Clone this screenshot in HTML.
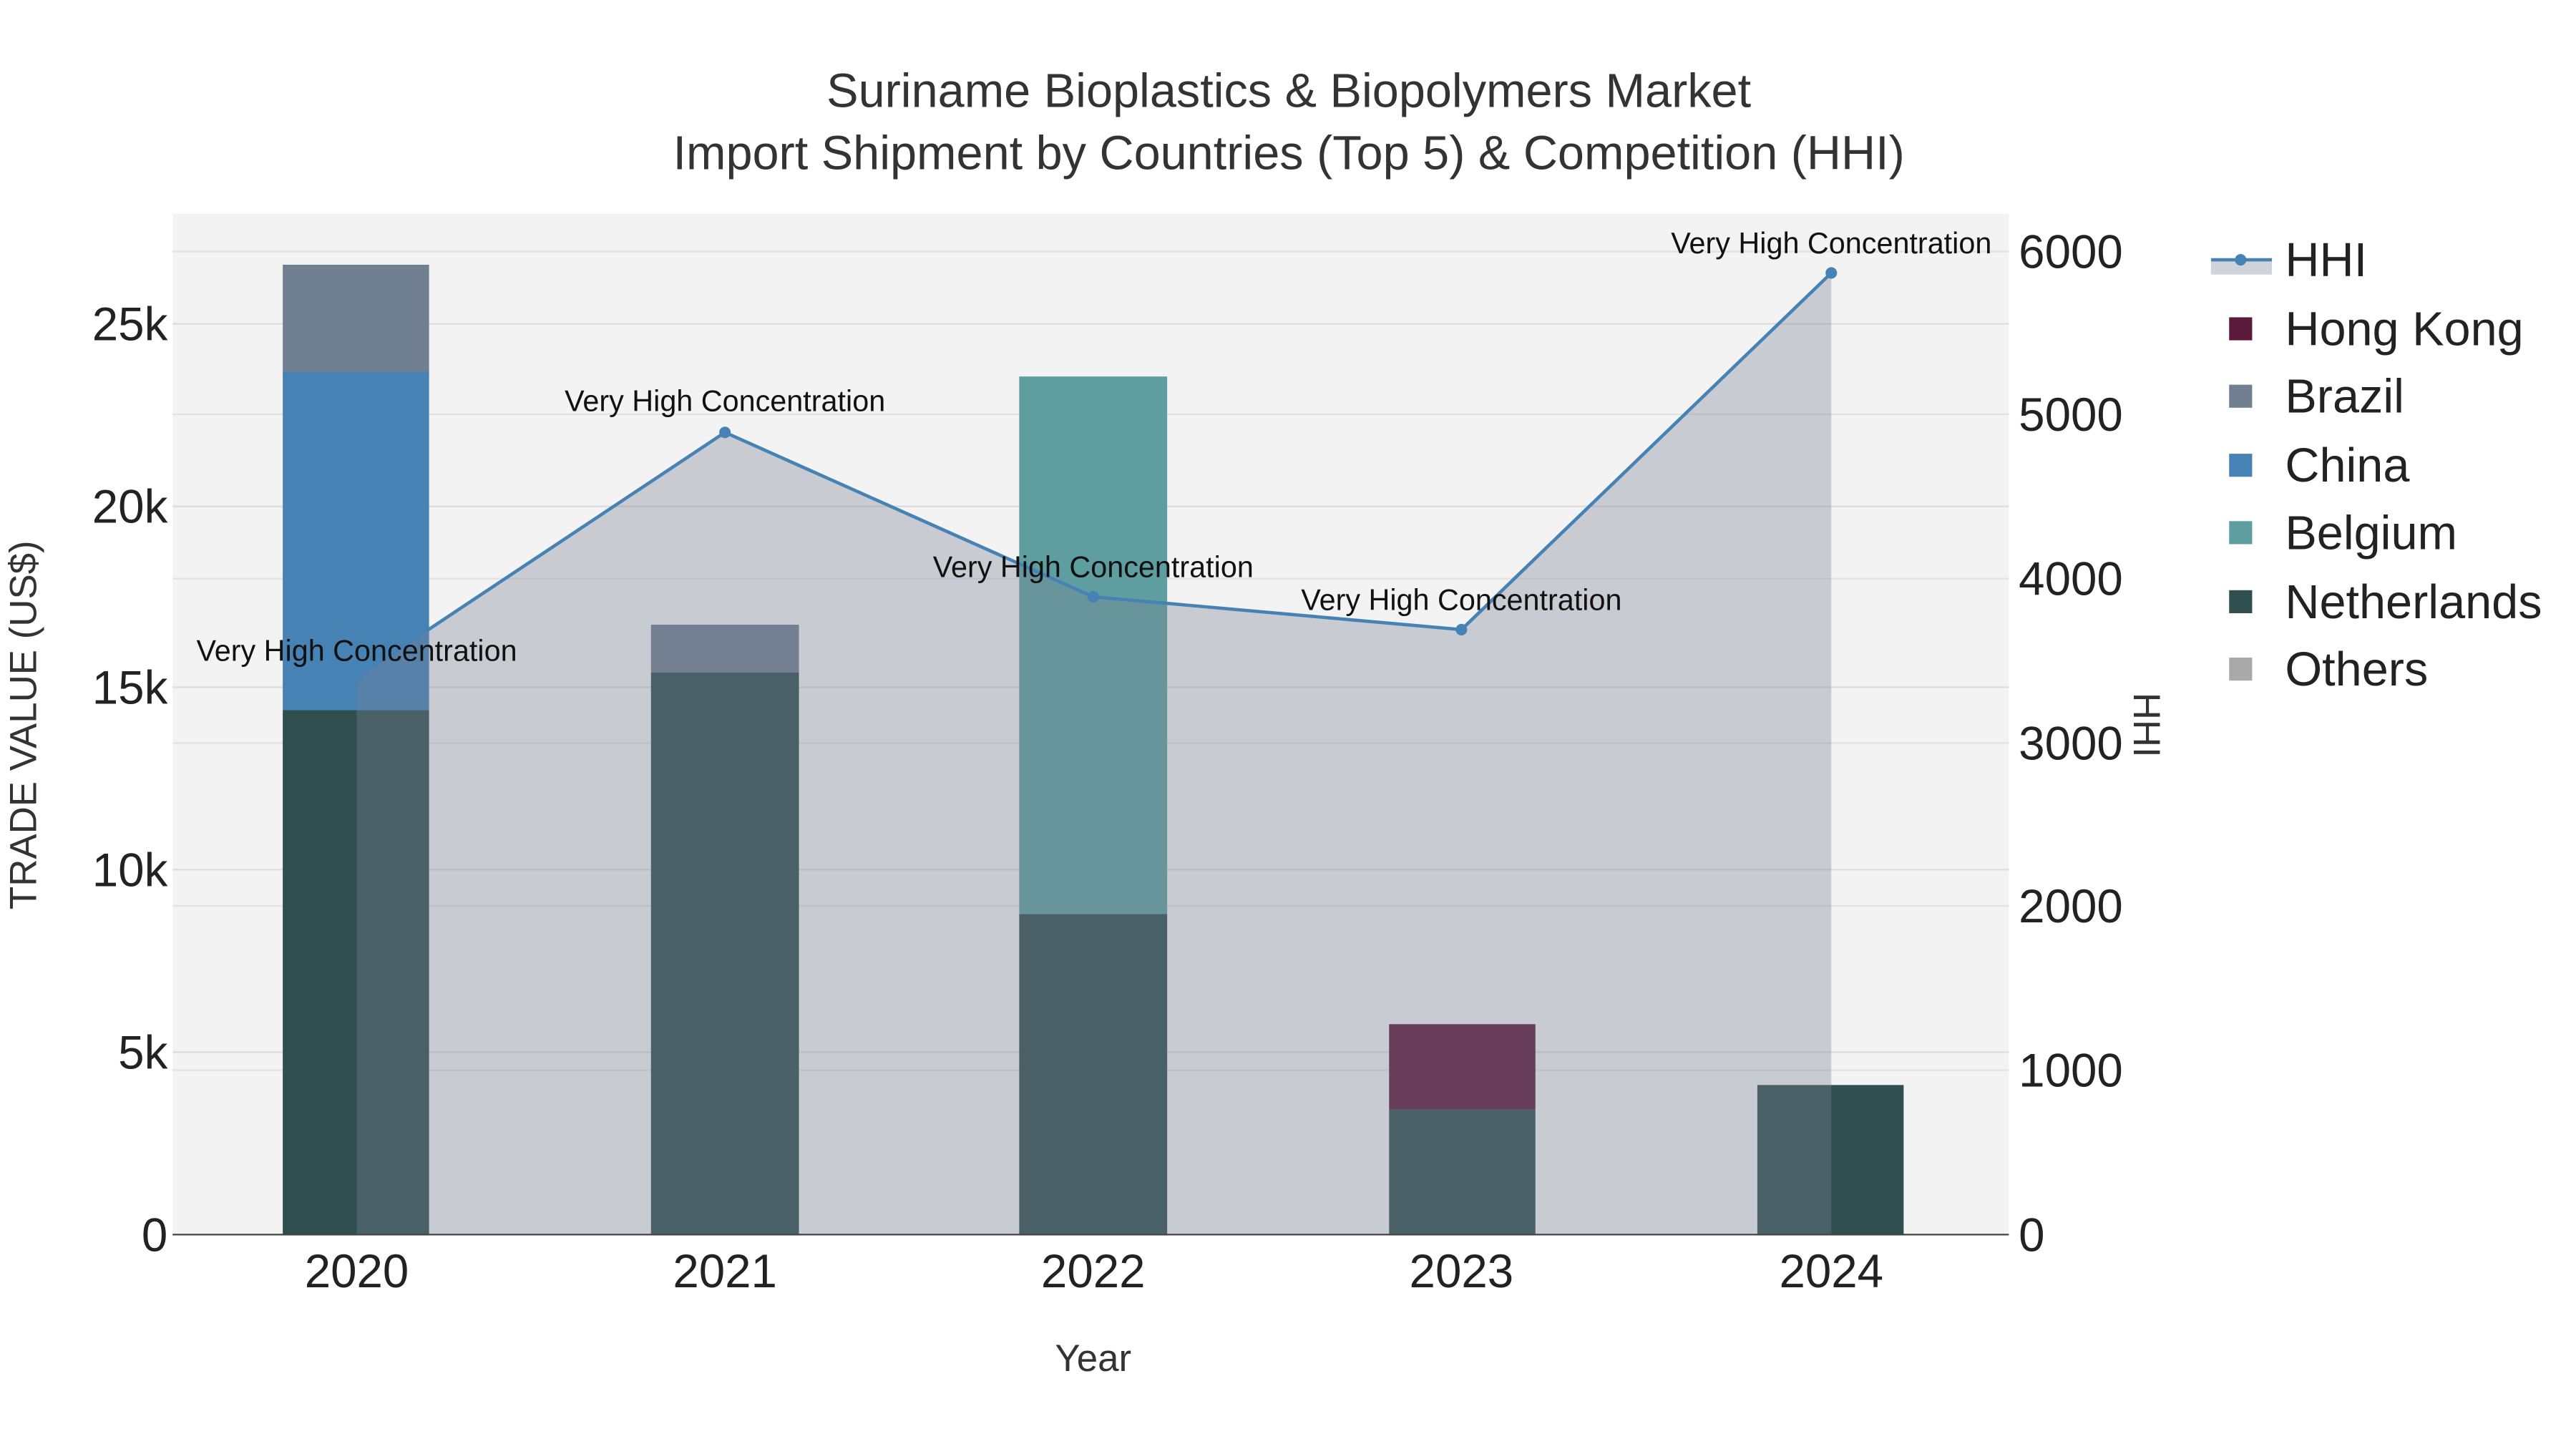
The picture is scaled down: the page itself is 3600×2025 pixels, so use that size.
<!DOCTYPE html>
<html><head><meta charset="utf-8"><style>html,body{margin:0;padding:0;background:#fff}svg{display:block}</style></head>
<body>
<svg width="3600" height="2025" viewBox="0 0 1567 881.4" xmlns="http://www.w3.org/2000/svg" font-family="Liberation Sans, sans-serif">
<rect x="0" y="0" width="1567" height="882" fill="#fff"/>
<rect x="105" y="130" width="1117" height="621" fill="#f3f3f3"/>
<g stroke="#e2e2e2" stroke-width="1">
<line x1="105" x2="1222" y1="651" y2="651"/><line x1="105" x2="1222" y1="551" y2="551"/><line x1="105" x2="1222" y1="452" y2="452"/><line x1="105" x2="1222" y1="352" y2="352"/><line x1="105" x2="1222" y1="252" y2="252"/><line x1="105" x2="1222" y1="153" y2="153"/>
</g>
<g stroke="#dcdcdc" stroke-width="1">
<line x1="105" x2="1222" y1="640" y2="640"/><line x1="105" x2="1222" y1="529" y2="529"/><line x1="105" x2="1222" y1="418" y2="418"/><line x1="105" x2="1222" y1="308" y2="308"/><line x1="105" x2="1222" y1="197" y2="197"/>
</g>
<rect x="172" y="161" width="89" height="66" fill="#708090"/>
<rect x="172" y="226" width="89" height="206" fill="#4682b4"/>
<rect x="172" y="432" width="89" height="319" fill="#2f4f4f"/>
<rect x="396" y="380" width="90" height="29" fill="#708090"/>
<rect x="396" y="409" width="90" height="342" fill="#2f4f4f"/>
<rect x="620" y="229" width="90" height="327" fill="#5f9ea0"/>
<rect x="620" y="556" width="90" height="195" fill="#2f4f4f"/>
<rect x="845" y="623" width="89" height="52" fill="#5c1a3a"/>
<rect x="845" y="675" width="89" height="76" fill="#2f4f4f"/>
<rect x="1069" y="660" width="89" height="91" fill="#2f4f4f"/>
<polygon points="217,412 441,263 665,363 889,383 1114,166 1114,751 217,751" fill="rgba(122,130,148,0.35)"/>
<polyline points="217,412 441,263 665,363 889,383 1114,166" fill="none" stroke="#4682b4" stroke-width="2"/>
<g fill="#4682b4"><circle cx="217" cy="412" r="3.5"/><circle cx="441" cy="263" r="3.5"/><circle cx="665" cy="363" r="3.5"/><circle cx="889" cy="383" r="3.5"/><circle cx="1114" cy="166" r="3.5"/></g>
<line x1="105" x2="1222" y1="751" y2="751" stroke="#444" stroke-width="1"/>
<g font-size="18" fill="#111" text-anchor="middle">
<text x="217" y="402">Very High Concentration</text>
<text x="441" y="250">Very High Concentration</text>
<text x="665" y="351">Very High Concentration</text>
<text x="889" y="371">Very High Concentration</text>
<text x="1114" y="154">Very High Concentration</text>
</g>
<g font-size="28.5" fill="#222" text-anchor="end">
<text x="102" y="761">0</text><text x="102" y="650">5k</text><text x="102" y="539">10k</text><text x="102" y="428">15k</text><text x="102" y="318">20k</text><text x="102" y="207">25k</text>
</g>
<g font-size="28.5" fill="#222" text-anchor="start">
<text x="1228" y="761">0</text><text x="1228" y="661">1000</text><text x="1228" y="561">2000</text><text x="1228" y="462">3000</text><text x="1228" y="362">4000</text><text x="1228" y="262">5000</text><text x="1228" y="163">6000</text>
</g>
<g font-size="28.5" fill="#222" text-anchor="middle">
<text x="217" y="783">2020</text><text x="441" y="783">2021</text><text x="665" y="783">2022</text><text x="889" y="783">2023</text><text x="1114" y="783">2024</text>
</g>
<text x="665" y="834" font-size="23" fill="#333" text-anchor="middle">Year</text>
<text transform="translate(22,441) rotate(-90)" font-size="23" fill="#333" text-anchor="middle">TRADE VALUE (US$)</text>
<text transform="translate(1298,441) rotate(90)" font-size="23" fill="#333" text-anchor="middle">HHI</text>
<g font-size="29" fill="#333" text-anchor="middle">
<text x="784" y="65">Suriname Bioplastics &amp; Biopolymers Market</text>
<text x="784" y="103">Import Shipment by Countries (Top 5) &amp; Competition (HHI)</text>
</g>
<rect x="1345" y="158" width="37" height="9" fill="rgba(122,130,148,0.35)"/>
<line x1="1345" x2="1382" y1="158" y2="158" stroke="#4682b4" stroke-width="2"/>
<circle cx="1363" cy="158" r="3.5" fill="#4682b4"/>
<rect x="1356" y="193" width="14" height="14" fill="#5c1a3a"/>
<rect x="1356" y="234" width="14" height="14" fill="#708090"/>
<rect x="1356" y="276" width="14" height="14" fill="#4682b4"/>
<rect x="1356" y="317" width="14" height="14" fill="#5f9ea0"/>
<rect x="1356" y="359" width="14" height="14" fill="#2f4f4f"/>
<rect x="1356" y="400" width="14" height="14" fill="#a9a9a9"/>
<g font-size="29" fill="#222">
<text x="1390" y="168">HHI</text>
<text x="1390" y="210">Hong Kong</text>
<text x="1390" y="251">Brazil</text>
<text x="1390" y="293">China</text>
<text x="1390" y="334">Belgium</text>
<text x="1390" y="376">Netherlands</text>
<text x="1390" y="417">Others</text>
</g>
</svg>
</body></html>
